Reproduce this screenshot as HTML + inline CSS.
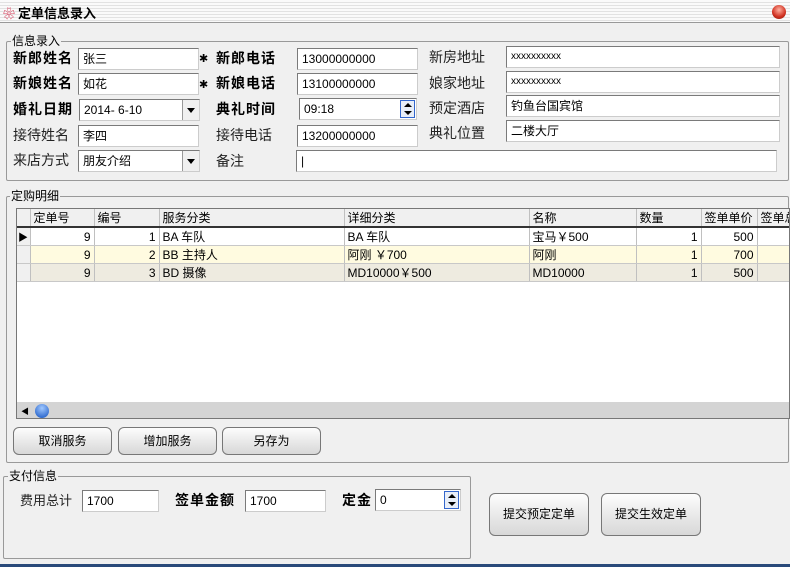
<!DOCTYPE html>
<html><head><meta charset="utf-8"><style>
*{box-sizing:border-box;margin:0;padding:0}
body{width:790px;height:567px;background:#f0f0f0;font-family:"Liberation Sans","Noto Sans CJK SC",sans-serif;font-size:12px;color:#000;position:relative;overflow:hidden}
.a{position:absolute}
.title{left:0;top:0;width:790px;height:23px;background:repeating-linear-gradient(#fafafa 0 2px,#e2e2e2 2px 3px);border-bottom:1px solid #999}
.inp{position:absolute;background:#fff;border:1px solid #7a7a7a;border-right-color:#ccc;border-bottom-color:#ccc;height:22px;line-height:20px;padding-left:4px;font-size:12px;white-space:nowrap;overflow:hidden}
.lb{position:absolute;font-size:14px;line-height:20px;color:#222}
.b{font-weight:bold;color:#000;letter-spacing:1px}
.grp{position:absolute;border:1px solid #999;border-radius:2px}
.gt{position:absolute;background:#f0f0f0;font-size:12px;line-height:14px;padding:0 1px}
.dd{position:absolute;right:0;top:0;width:17px;height:20px;border-left:1px solid #999;background:#f0f0f0}
.dd:after{content:"";position:absolute;left:4px;top:8px;border:4px solid transparent;border-top:5px solid #000;border-bottom:0}
.spin{position:absolute;right:1px;top:1px;width:15px;height:18px;border:1px solid #3366cc;background:#e8eef8}
.spin:before{content:"";position:absolute;left:3px;top:2px;border:4px solid transparent;border-bottom:4px solid #000;border-top:0}
.spin:after{content:"";position:absolute;left:3px;top:10px;border:4px solid transparent;border-top:4px solid #000;border-bottom:0}
table{border-collapse:collapse;font-size:12px}
td{border-right:1px solid #c0c0c0;border-bottom:1px solid #c8c8c8;height:18px;padding:0 3px;white-space:nowrap}
.btn{position:absolute;height:28px;border:1px solid #777;border-radius:6px;background:linear-gradient(#fdfdfd,#e6e6e6 60%,#d8d8d8);text-align:center;line-height:26px;font-size:12px}
</style></head><body>
<div class="a title"></div>
<div class="a" style="left:3px;top:5px;color:#d02040;font-size:12px">❀</div>
<div class="a" style="left:18px;top:3px;font-size:13px;font-weight:bold">定单信息录入</div>
<div class="a" style="left:772px;top:5px;width:14px;height:14px;border-radius:50%;background:radial-gradient(circle at 50% 35%,#ffb0a0,#d03020 60%,#802010)"></div>

<div class="grp" style="left:6px;top:41px;width:783px;height:140px"></div>
<div class="gt" style="left:11px;top:34px">信息录入</div>

<div class="lb b" style="left:13px;top:48px">新郎姓名</div>
<div class="lb b" style="left:13px;top:73px">新娘姓名</div>
<div class="lb b" style="left:13px;top:99px">婚礼日期</div>
<div class="lb" style="left:13px;top:125px">接待姓名</div>
<div class="lb" style="left:13px;top:150px">来店方式</div>
<div class="inp" style="left:78px;top:48px;width:121px">张三</div>
<div class="inp" style="left:78px;top:73px;width:121px">如花</div>
<div class="inp" style="left:79px;top:99px;width:121px">2014- 6-10<div class="dd"></div></div>
<div class="inp" style="left:78px;top:125px;width:121px">李四</div>
<div class="inp" style="left:78px;top:150px;width:122px">朋友介绍<div class="dd"></div></div>
<div class="a" style="left:199px;top:52px;font-size:11px">✱</div>
<div class="a" style="left:199px;top:78px;font-size:11px">✱</div>

<div class="lb b" style="left:216px;top:48px">新郎电话</div>
<div class="lb b" style="left:216px;top:73px">新娘电话</div>
<div class="lb b" style="left:216px;top:99px">典礼时间</div>
<div class="lb" style="left:216px;top:125px">接待电话</div>
<div class="lb" style="left:216px;top:151px">备注</div>
<div class="inp" style="left:297px;top:48px;width:121px">13000000000</div>
<div class="inp" style="left:297px;top:73px;width:121px">13100000000</div>
<div class="inp" style="left:299px;top:98px;width:118px">09:18<div class="spin"></div></div>
<div class="inp" style="left:297px;top:125px;width:121px">13200000000</div>
<div class="inp" style="left:296px;top:150px;width:481px">|</div>

<div class="lb" style="left:429px;top:47px">新房地址</div>
<div class="lb" style="left:429px;top:73px">娘家地址</div>
<div class="lb" style="left:429px;top:98px">预定酒店</div>
<div class="lb" style="left:429px;top:123px">典礼位置</div>
<div class="inp" style="left:506px;top:46px;width:274px;font-size:10px">xxxxxxxxxx</div>
<div class="inp" style="left:506px;top:71px;width:274px;font-size:10px">xxxxxxxxxx</div>
<div class="inp" style="left:506px;top:95px;width:274px">钓鱼台国宾馆</div>
<div class="inp" style="left:506px;top:120px;width:274px">二楼大厅</div>

<div class="grp" style="left:6px;top:196px;width:783px;height:267px"></div>
<div class="gt" style="left:10px;top:189px">定购明细</div>
<div class="a" style="left:16px;top:208px;width:774px;height:211px;background:#fff;border:1px solid #777;overflow:hidden">
<table style="width:800px">
<tr style="background:#f0f0f0"><td style="width:13px;border-bottom:2px solid #333"></td><td style="width:64px;border-bottom:2px solid #333">定单号</td><td style="width:65px;border-bottom:2px solid #333">编号</td><td style="width:185px;border-bottom:2px solid #333">服务分类</td><td style="width:185px;border-bottom:2px solid #333">详细分类</td><td style="width:107px;border-bottom:2px solid #333">名称</td><td style="width:65px;border-bottom:2px solid #333">数量</td><td style="width:56px;border-bottom:2px solid #333">签单单价</td><td style="border-bottom:2px solid #333">签单总</td></tr>
<tr><td style="background:#f0f0f0;font-size:10px;padding:0 1px">▶</td><td align="right">9</td><td align="right">1</td><td>BA 车队</td><td>BA 车队</td><td>宝马￥500</td><td align="right">1</td><td align="right">500</td><td></td></tr>
<tr style="background:#fffbe0"><td style="background:#f0f0f0"></td><td align="right">9</td><td align="right">2</td><td>BB 主持人</td><td>阿刚 ￥700</td><td>阿刚</td><td align="right">1</td><td align="right">700</td><td></td></tr>
<tr style="background:#eeebe0"><td style="background:#f0f0f0"></td><td align="right">9</td><td align="right">3</td><td>BD 摄像</td><td>MD10000￥500</td><td>MD10000</td><td align="right">1</td><td align="right">500</td><td></td></tr>
</table>
<div class="a" style="left:0;top:193px;width:774px;height:17px;background:#d4d4d4"></div>
<div class="a" style="left:4px;top:197px;font-size:8px">◀</div>
<div class="a" style="left:18px;top:195px;width:14px;height:14px;border-radius:50%;background:radial-gradient(circle at 50% 30%,#a0c8ff,#1050c0)"></div>
</div>
<div class="btn" style="left:13px;top:427px;width:99px">取消服务</div>
<div class="btn" style="left:118px;top:427px;width:99px">增加服务</div>
<div class="btn" style="left:222px;top:427px;width:99px">另存为</div>

<div class="grp" style="left:3px;top:476px;width:468px;height:83px"></div>
<div class="gt" style="left:8px;top:469px">支付信息</div>
<div class="lb" style="left:20px;top:491px;font-size:13px">费用总计</div>
<div class="inp" style="left:82px;top:490px;width:77px">1700</div>
<div class="lb b" style="left:175px;top:490px">签单金额</div>
<div class="inp" style="left:245px;top:490px;width:81px">1700</div>
<div class="lb b" style="left:342px;top:490px">定金</div>
<div class="inp" style="left:375px;top:489px;width:86px">0<div class="spin"></div></div>
<div class="btn" style="left:489px;top:493px;width:100px;height:43px;line-height:41px">提交预定定单</div>
<div class="btn" style="left:601px;top:493px;width:100px;height:43px;line-height:41px">提交生效定单</div>
<div class="a" style="left:0;top:564px;width:790px;height:3px;background:#2a4a7a"></div>
</body></html>
